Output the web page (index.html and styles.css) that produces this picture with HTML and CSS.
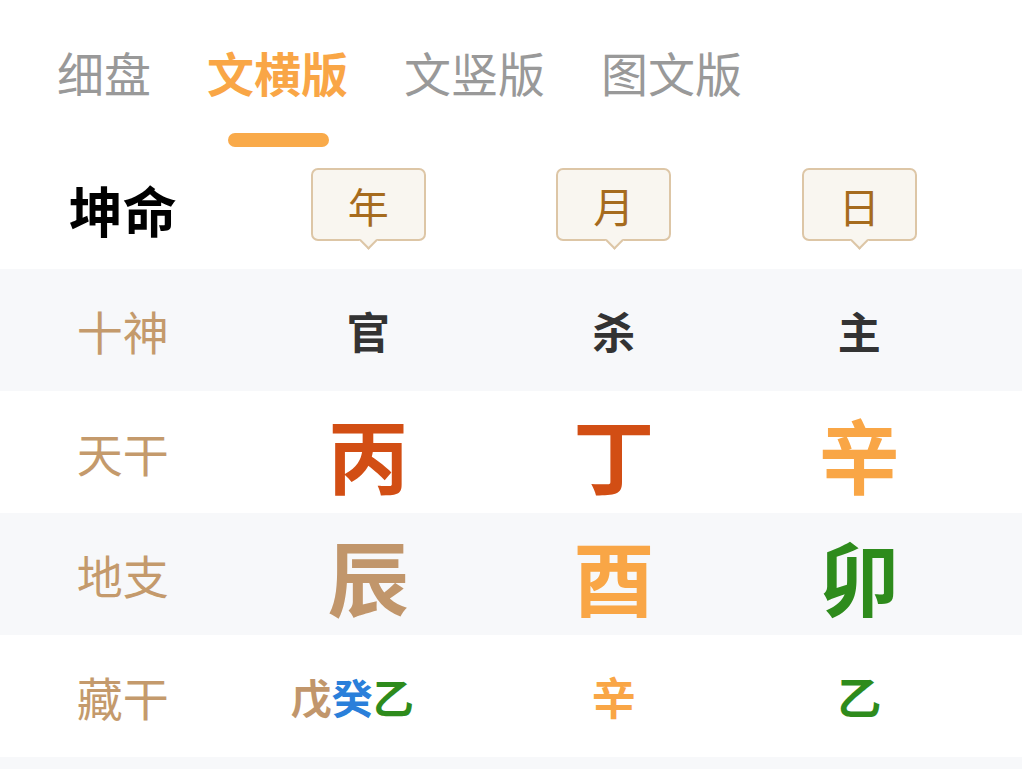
FILE: index.html
```html
<!DOCTYPE html>
<html lang="zh">
<head>
<meta charset="utf-8">
<link rel="stylesheet" href="styles.css">
</head>
<body>
<nav class="tabs">
  <div class="tab">细盘</div>
  <div class="tab active">文横版<span class="bar"></span></div>
  <div class="tab">文竖版</div>
  <div class="tab">图文版</div>
</nav>
<section class="chart">
  <div class="row head">
    <div class="cell gender">坤命</div>
    <div class="cell"><span class="pillar">年</span></div>
    <div class="cell"><span class="pillar">月</span></div>
    <div class="cell"><span class="pillar">日</span></div>
  </div>
  <div class="row shade">
    <div class="cell label">十神</div>
    <div class="cell god">官</div>
    <div class="cell god">杀</div>
    <div class="cell god">主</div>
  </div>
  <div class="row">
    <div class="cell label">天干</div>
    <div class="cell big fire">丙</div>
    <div class="cell big fire">丁</div>
    <div class="cell big metal">辛</div>
  </div>
  <div class="row shade">
    <div class="cell label">地支</div>
    <div class="cell big earth">辰</div>
    <div class="cell big metal">酉</div>
    <div class="cell big wood">卯</div>
  </div>
  <div class="row">
    <div class="cell label">藏干</div>
    <div class="cell hidden multi"><span class="earth">戊</span><span class="water">癸</span><span class="wood">乙</span></div>
    <div class="cell hidden"><span class="metal">辛</span></div>
    <div class="cell hidden"><span class="wood">乙</span></div>
  </div>
  <div class="row shade tail"></div>
</section>
</body>
</html>
```
FILE: styles.css
```css
* { box-sizing: border-box; }
body {
  margin: 0;
  background: #ffffff;
  font-family: "Noto Sans CJK SC", "Noto Sans", sans-serif;
  width: 1022px;
  height: 769px;
  overflow: hidden;
}
.tabs {
  display: flex;
  gap: 56px;
  padding: 42px 0 0 57px;
  height: 160px;
}
.tab {
  position: relative;
  font-size: 47px;
  line-height: 60px;
  color: #999999;
}
.tab.active {
  color: #F9A646;
  font-weight: 700;
}
.bar {
  position: absolute;
  left: 50%;
  top: 91px;
  width: 101px;
  height: 14px;
  margin-left: -50px;
  border-radius: 7px;
  background: #F9AA4A;
}
.chart { display: flex; flex-direction: column; }
.row {
  display: grid;
  grid-template-columns: repeat(4, 245.5px);
  height: 122px;
  align-items: center;
}
.row.head { height: 109px; align-items: start; }
.row.shade { background: #F7F8FA; }
.row.tail { height: 20px; }
.cell {
  display: flex;
  justify-content: center;
  align-items: center;
}
.gender {
  font-size: 54px;
  font-weight: 700;
  color: #000;
  height: 98px;
}
.pillar {
  position: relative;
  margin-top: 8px;
  width: 115px;
  height: 73px;
  border: 2px solid #DDC6A6;
  border-radius: 7px;
  background: #F9F6F0;
  color: #A66B1E;
  font-size: 41px;
  display: flex;
  align-items: center;
  justify-content: center;
}
.pillar::after {
  content: "";
  position: absolute;
  left: 50%;
  bottom: -8px;
  width: 11px;
  height: 11px;
  margin-left: -6px;
  background: #F9F6F0;
  border-right: 2px solid #DDC6A6;
  border-bottom: 2px solid #DDC6A6;
  transform: rotate(45deg);
}
.label {
  font-size: 46px;
  color: #C49A6C;
}
.god {
  font-size: 43px;
  font-weight: 700;
  color: #333333;
}
.big {
  font-size: 81px;
  font-weight: 700;
}
.hidden {
  font-size: 44px;
  font-weight: 700;
}
.hidden.multi { font-size: 41px; padding-right: 32px; }
.fire { color: #D24E14; }
.metal { color: #F9A646; }
.earth { color: #C1966B; }
.wood { color: #2E8B1C; }
.water { color: #2A7FDA; }
```
